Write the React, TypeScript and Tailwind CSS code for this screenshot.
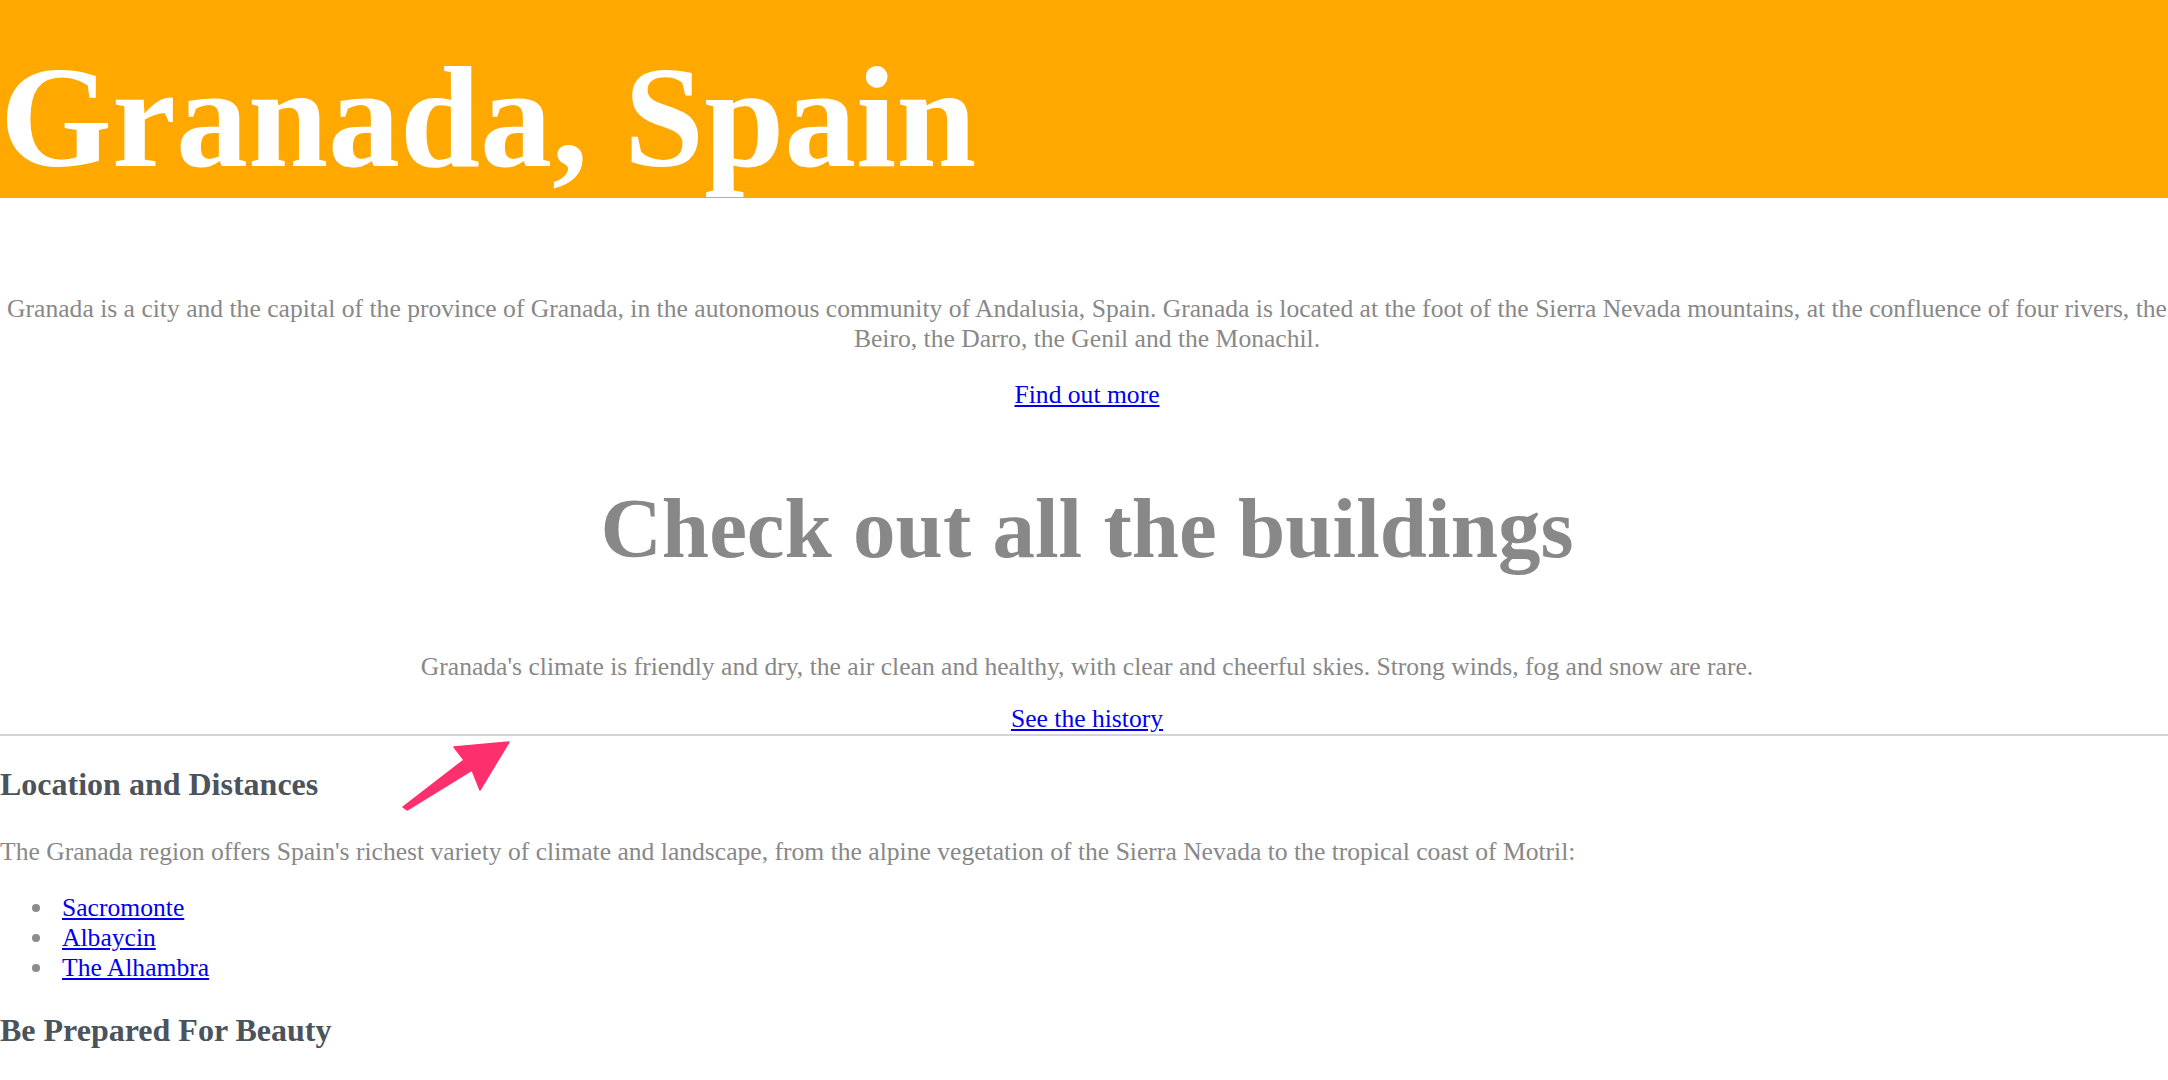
export default function App() {
  return (
    <div className="relative w-full h-[1080px] overflow-hidden bg-white font-['Liberation_Serif','Times_New_Roman',serif]">
      <div className="w-[2174px]">
        <header className="bg-[#ffa800] h-[198px] pt-[38px]">
          <h1 className="m-0 text-[144px] leading-[160px] font-bold text-white">Granada, Spain</h1>
        </header>

        <section className="text-center text-[#888888] text-[25.6px] leading-[30px]">
          <p className="mt-[96px]">
            Granada is a city and the capital of the province of Granada, in the autonomous community of Andalusia, Spain. Granada is located at the foot of the Sierra Nevada mountains, at the confluence of four rivers, the Beiro, the Darro, the Genil and the Monachil.
          </p>
          <p className="mt-[26px]">
            <a href="#" className="text-[#0000ee] underline">Find out more</a>
          </p>
          <h2 className="mt-[71px] text-[85px] leading-[94px] font-bold">Check out all the buildings</h2>
          <p className="mt-[77px]">
            Granada's climate is friendly and dry, the air clean and healthy, with clear and cheerful skies. Strong winds, fog and snow are rare.
          </p>
          <p className="mt-[22px]">
            <a href="#" className="text-[#0000ee] underline">See the history</a>
          </p>
        </section>

        <hr className="border-0 h-[2px] bg-[#d4d4d4]" />

        <section className="text-[#888888] text-[25.6px] leading-[30px]">
          <h3 className="mt-[31px] text-[32px] leading-[35px] font-bold text-[#4b535c]">Location and Distances</h3>
          <p className="mt-[35px]">
            The Granada region offers Spain's richest variety of climate and landscape, from the alpine vegetation of the Sierra Nevada to the tropical coast of Motril:
          </p>
          <ul className="mt-[26px]">
            {["Sacromonte", "Albaycin", "The Alhambra"].map((t) => (
              <li key={t} className="flex items-center h-[30px]">
                <span className="ml-[32px] mr-[22px] w-[8px] h-[8px] rounded-full bg-[#8c8c8c]" />
                <a href="#" className="text-[#0000ee] underline">{t}</a>
              </li>
            ))}
          </ul>
          <h3 className="mt-[30px] text-[32px] leading-[35px] font-bold text-[#4b535c]">Be Prepared For Beauty</h3>
        </section>
      </div>

      <svg className="absolute left-[395px] top-[735px] w-[120px] h-[80px]" viewBox="0 0 120 80">
        <polygon
          points="8,72 69,25 59,12 114,7 85,55 77,35 12,75"
          fill="#fd2f6c"
          stroke="#fd2f6c"
          strokeWidth="1.5"
          strokeLinejoin="round"
        />
      </svg>
    </div>
  );
}
